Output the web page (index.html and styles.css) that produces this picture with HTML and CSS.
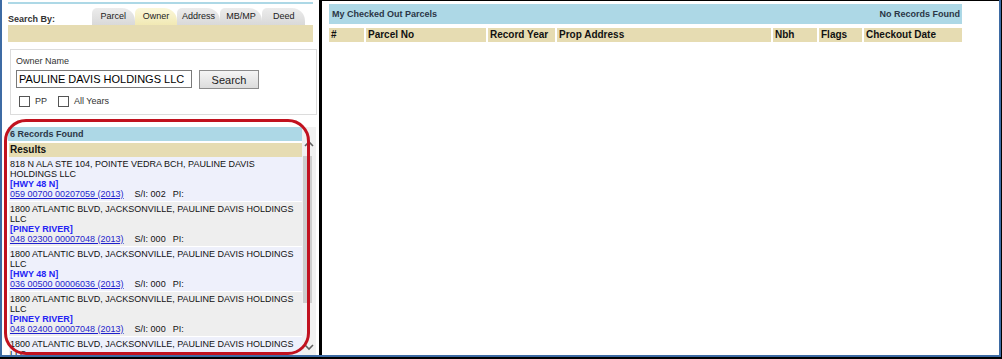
FILE: index.html
```html
<!DOCTYPE html>
<html lang="en">
<head>
    <meta charset="UTF-8">
    <title>Parcel Search</title>
    <link rel="stylesheet" href="styles.css">
</head>
<body>

    <div class="screen">
        <div class="frame">

            <!-- Search side -->
            <div class="left-pane">
                <div class="top-line"></div>

                <div class="search-by">
                    <span class="search-by-label">Search By:</span>
                    <div class="tabs">
                        <span class="tab">Parcel</span>
                        <span class="tab tab-active">Owner</span>
                        <span class="tab">Address</span>
                        <span class="tab">MB/MP</span>
                        <span class="tab">Deed</span>
                    </div>
                </div>
                <div class="tab-bar"></div>

                <div class="search-box">
                    <div class="field-label">Owner Name</div>
                    <div class="search-row">
                        <input class="owner-input" type="text" value="PAULINE DAVIS HOLDINGS LLC">
                        <button class="search-button">Search</button>
                    </div>
                    <div class="options">
                        <label class="option"><span class="check"></span>PP</label>
                        <label class="option"><span class="check"></span>All Years</label>
                    </div>
                </div>

                <div class="results">
                    <div class="results-list">
                        <div class="results-count">6 Records Found</div>
                        <div class="results-title">Results</div>

                        <div class="result-row">
                            <div>818 N ALA STE 104, POINTE VEDRA BCH, PAULINE DAVIS HOLDINGS LLC</div>
                            <div class="region">[HWY 48 N]</div>
                            <div><a href="#">059 00700 00207059 (2013)</a><span class="si">S/I: 002</span><span class="pi">PI:</span></div>
                        </div>
                        <div class="result-row">
                            <div>1800 ATLANTIC BLVD, JACKSONVILLE, PAULINE DAVIS HOLDINGS LLC</div>
                            <div class="region">[PINEY RIVER]</div>
                            <div><a href="#">048 02300 00007048 (2013)</a><span class="si">S/I: 000</span><span class="pi">PI:</span></div>
                        </div>
                        <div class="result-row">
                            <div>1800 ATLANTIC BLVD, JACKSONVILLE, PAULINE DAVIS HOLDINGS LLC</div>
                            <div class="region">[HWY 48 N]</div>
                            <div><a href="#">036 00500 00006036 (2013)</a><span class="si">S/I: 000</span><span class="pi">PI:</span></div>
                        </div>
                        <div class="result-row">
                            <div>1800 ATLANTIC BLVD, JACKSONVILLE, PAULINE DAVIS HOLDINGS LLC</div>
                            <div class="region">[PINEY RIVER]</div>
                            <div><a href="#">048 02400 00007048 (2013)</a><span class="si">S/I: 000</span><span class="pi">PI:</span></div>
                        </div>
                        <div class="result-row">
                            <div>1800 ATLANTIC BLVD, JACKSONVILLE, PAULINE DAVIS HOLDINGS LLC</div>
                            <div class="region">[HWY 48 N]</div>
                            <div><a href="#">036 00400 00006036 (2013)</a><span class="si">S/I: 000</span><span class="pi">PI:</span></div>
                        </div>
                        <div class="result-row">
                            <div>1800 ATLANTIC BLVD, JACKSONVILLE, PAULINE DAVIS HOLDINGS LLC</div>
                            <div class="region">[PINEY RIVER]</div>
                            <div><a href="#">048 02500 00007048 (2013)</a><span class="si">S/I: 000</span><span class="pi">PI:</span></div>
                        </div>
                    </div>

                    <div class="scrollbar">
                        <svg class="scroll-arrow scroll-up" width="10" height="7" viewBox="0 0 10 7">
                            <polyline points="1,6 5,2 9,6" fill="none" stroke="#606060" stroke-width="1.6"/>
                        </svg>
                        <div class="scroll-thumb"></div>
                        <svg class="scroll-arrow scroll-down" width="10" height="7" viewBox="0 0 10 7">
                            <polyline points="1,1 5,5 9,1" fill="none" stroke="#606060" stroke-width="1.6"/>
                        </svg>
                    </div>
                </div>

                <!-- red ring drawn round the results -->
                <div class="highlight-ring"></div>
            </div>

            <!-- Checked out parcels -->
            <div class="right-pane">
                <div class="checkout-head">
                    <span>My Checked Out Parcels</span>
                    <span>No Records Found</span>
                </div>
                <div class="checkout-cols">
                    <span>#</span>
                    <span>Parcel No</span>
                    <span>Record Year</span>
                    <span>Prop Address</span>
                    <span>Nbh</span>
                    <span>Flags</span>
                    <span>Checkout Date</span>
                </div>
            </div>

        </div>
    </div>

</body>
</html>
```

FILE: styles.css
```css
body {
    margin: 0;
    background-color: #fff;
    font-family: 'Liberation Sans', Arial, sans-serif;
    color: #111;
}

.screen {
    width: 1002px;
    height: 359px;
    box-sizing: border-box;
    border-right: 1px solid #000;
    border-bottom: 2px solid #000;
}

.frame {
    height: 100%;
    box-sizing: border-box;
    border-left: 2px solid #3d6ba4;
    border-right: 2px solid #3d6ba4;
    border-bottom: 2px solid #3d6ba4;
    display: flex;
    overflow: hidden;
}

/* ---------- left pane ---------- */

.left-pane {
    position: relative;
    width: 317px;
    border-right: 3px solid #000;
    display: flex;
    flex-direction: column;
}

.top-line {
    height: 2px;
    margin: 2px 6px 0;
    background-color: #add8e6;
}

.search-by {
    height: 21px;
    margin: 0 6px;
    display: flex;
    align-items: flex-end;
}

.search-by-label {
    width: 84px;
    font-size: 9px;
    font-weight: bold;
    line-height: 11px;
    color: #333;
}

.tabs {
    display: flex;
}

.tab {
    width: 42.6px;
    height: 17px;
    box-sizing: border-box;
    padding-top: 3px;
    text-align: center;
    font-size: 9px;
    line-height: 11px;
    color: #222;
    background: linear-gradient(#ececec, #d9d9d9);
    border-radius: 5px 13px 0 0;
}

.tab-active {
    background: linear-gradient(#fbf7da, #f1e9b4);
}

.tab-bar {
    height: 17px;
    margin: 0 6px;
    background-color: #e6dcb2;
}

.search-box {
    height: 66px;
    box-sizing: border-box;
    margin: 7px 2px 0 8px;
    padding: 6px 5px 0;
    border: 1px solid #dcdcdc;
}

.field-label {
    font-size: 9px;
    line-height: 11px;
    color: #333;
}

.search-row {
    display: flex;
    align-items: flex-start;
    gap: 7px;
    margin-top: 3px;
}

.owner-input {
    width: 176px;
    height: 18px;
    box-sizing: border-box;
    margin: 0;
    padding: 0 2px;
    border: 1px solid #7a7a7a;
    font-family: 'Liberation Sans', Arial, sans-serif;
    font-size: 11px;
    color: #000;
}

.search-button {
    width: 60px;
    height: 19px;
    margin: 0;
    padding: 0;
    border: 1px solid #8c8c8c;
    background: linear-gradient(#f5f5f5, #dcdcdc);
    font-family: 'Liberation Sans', Arial, sans-serif;
    font-size: 11px;
    color: #222;
}

.options {
    display: flex;
    margin-top: 7px;
    padding-left: 3px;
}

.option {
    display: flex;
    align-items: center;
    gap: 5px;
    margin-right: 11px;
    font-size: 9px;
    line-height: 11px;
    color: #333;
}

.check {
    width: 11px;
    height: 11px;
    box-sizing: border-box;
    border: 1px solid #555;
    background-color: #fff;
}

/* ---------- results ---------- */

.results {
    flex: 1;
    min-height: 0;
    margin: 12px 3px 0 6px;
    display: flex;
    overflow: hidden;
}

.results-list {
    flex: 1;
    overflow: hidden;
}

.results-count {
    height: 14px;
    padding-left: 2px;
    background-color: #add8e6;
    font-size: 9px;
    font-weight: bold;
    line-height: 14px;
    color: #2b3646;
}

.results-title {
    height: 14px;
    margin: 2px 0 0 1px;
    padding-left: 1px;
    background-color: #e6dcb2;
    font-size: 10px;
    font-weight: bold;
    line-height: 14px;
}

.result-row {
    margin-left: 1px;
    padding: 2px 0 2px 1px;
    border-bottom: 1px solid #fff;
    background-color: #eef0fb;
    font-size: 9px;
    line-height: 10px;
    color: #111;
}

.result-row:nth-of-type(even) {
    background-color: #eeeeee;
}

.region {
    font-weight: bold;
    color: #2424f5;
}

.result-row a {
    color: #1f1fcc;
}

.si {
    margin-left: 11px;
}

.pi {
    margin-left: 7px;
}

.scrollbar {
    width: 14px;
    background-color: #f1f1f1;
    display: flex;
    flex-direction: column;
}

.scroll-arrow {
    display: block;
    margin-left: 2px;
}

.scroll-up {
    margin-top: 13px;
}

.scroll-thumb {
    width: 9px;
    height: 147px;
    margin: 9px 0 0 1px;
    background-color: #cdcdcd;
}

.scroll-down {
    margin-top: auto;
    margin-bottom: 4px;
}

.highlight-ring {
    position: absolute;
    left: 2px;
    top: 119px;
    width: 306px;
    height: 236px;
    box-sizing: border-box;
    border: 3px solid #c1121f;
    border-radius: 22px;
}

/* ---------- right pane ---------- */

.right-pane {
    flex: 1;
    border-top: 1px solid #000;
    padding: 3px 0 0 7px;
}

.checkout-head {
    width: 633px;
    height: 20px;
    box-sizing: border-box;
    padding: 0 2px 0 3px;
    display: flex;
    justify-content: space-between;
    align-items: center;
    background-color: #add8e6;
    font-size: 9px;
    font-weight: bold;
    color: #2b3646;
}

.checkout-cols {
    display: grid;
    grid-template-columns: 35px 120px 67px 214px 44px 43px 98px;
    column-gap: 2px;
    margin-top: 4px;
}

.checkout-cols span {
    height: 14px;
    padding-left: 2px;
    background-color: #e6dcb2;
    font-size: 10px;
    font-weight: bold;
    line-height: 14px;
}
```
